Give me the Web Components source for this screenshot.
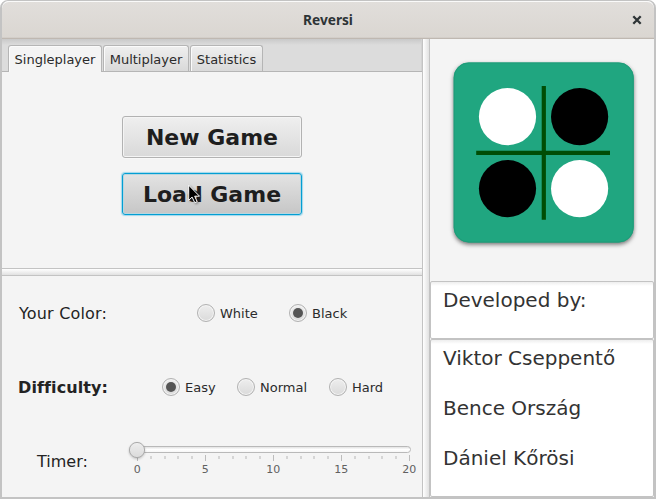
<!DOCTYPE html>
<html lang="en">
<head>
<meta charset="utf-8">
<title>Reversi</title>
<style>
html,body{margin:0;width:656px;height:499px;overflow:hidden;background:#fff}
body{font-family:"DejaVu Sans",sans-serif;font-size:13px;color:#2b2b2b}
</style>
</head>
<body>
<app-window heading="Reversi">
  <game-menu slot="left"></game-menu>
  <game-options slot="left"></game-options>
  <game-logo slot="right"></game-logo>
  <text-panel slot="right" style="height:58px">Developed by:</text-panel>
  <text-panel slot="right" style="height:158px"><div>Viktor Cseppentő</div><div>Bence Ország</div><div>Dániel Kőrösi</div></text-panel>
</app-window>
<script>
function define(name, html){
  customElements.define(name, class extends HTMLElement{
    constructor(){
      super();
      const t=document.createElement('template');
      t.innerHTML=typeof html==='function'?html(this):html;
      this.attachShadow({mode:'open'}).append(t.content.cloneNode(true));
    }
  });
}

define('app-window', el=>`<style>
:host{display:flex;flex-direction:column;box-sizing:border-box;width:656px;height:499px;border:solid #c3c3c3;border-width:1px 2px 2px;border-radius:8px 8px 0 0;background:#f4f4f4;overflow:hidden}
header{height:38px;box-sizing:border-box;flex:none;display:grid;grid-template-columns:1fr auto 1fr;align-items:center;background:linear-gradient(#e1dedb,#dad6d1);border-top:1px solid #fafafa;border-bottom:1px solid #bfb8b1;border-radius:7px 7px 0 0;box-shadow:inset 0 -1px #d3cec9}
h1{grid-column:2;margin:0;font:bold 13.7px/20px "Noto Sans",sans-serif;color:#2e3436;letter-spacing:0}
svg{justify-self:end;margin:-1px 12px 0 0}
main{flex:1;display:grid;grid-template-columns:420px 8px 1fr;min-height:0}
.col{display:flex;flex-direction:column;min-width:0}
.bar{box-sizing:border-box;border:solid #c3c3c3;border-width:0 1px;background:linear-gradient(90deg,#fff,#e1e1e1)}
</style>
<header><h1>${el.getAttribute('heading')}</h1><svg width="10" height="10" viewBox="0 0 10 10"><path d="M1.3 1.3 8.7 8.7M8.7 1.3 1.3 8.7" stroke="#2e3436" stroke-width="2.3"/></svg></header>
<main><div class="col"><slot name="left"></slot></div><div class="bar"></div><div class="col"><slot name="right"></slot></div></main>`);

define('tab-item', `<style>
:host{display:block;box-sizing:border-box;height:26px;padding:0 5px;border:1px solid #b5b5b5;border-bottom:0;border-radius:3px 3px 0 0;background:linear-gradient(#efefef,#d9d9d9);box-shadow:inset 1px 1px #fbfbfb;line-height:27px;text-align:center;white-space:nowrap}
:host([active]){background:#f4f4f4;height:27px}
</style><slot></slot>`);

define('push-button', `<style>
:host{display:grid;place-items:center;box-sizing:border-box;width:180px;height:42px;padding-top:2px;border:1px solid #b2b2b2;border-radius:3px;background:linear-gradient(#efefef,#d9d9d9);box-shadow:inset 0 0 0 1px #f4f4f4,0 1px #f8f8f8;font-weight:bold;font-size:22px;color:#1e1e1e;line-height:38px}
:host([focused]){border-color:#039ed3;background:linear-gradient(#e3e3e3,#c6c6c6);box-shadow:0 0 1px 1px #9fd8ec,inset 0 0 0 1px #b8d6df}
</style><slot></slot>`);

define('game-menu', `<style>
:host{display:flex;flex-direction:column;height:229px}
nav{height:33px;box-sizing:border-box;display:flex;gap:1px;align-items:flex-start;padding:6px 0 0 6px;background:linear-gradient(#c9c9c9,#dcdcdc 6px);border-bottom:1px solid #b5b5b5;box-shadow:inset -1px 0 #d2d2d2}
.buttons{position:relative;display:flex;flex-direction:column;gap:15px;align-items:center;padding-top:44px}
svg{position:absolute;left:185px;top:111px}
</style>
<nav><tab-item active style="width:94px">Singleplayer</tab-item><tab-item style="width:86px">Multiplayer</tab-item><tab-item style="width:73px">Statistics</tab-item></nav>
<div class="buttons"><push-button>New Game</push-button><push-button focused>Load Game</push-button>
<svg width="15" height="23" viewBox="0 0 15 23"><path d="M1.7 2.2V17.3L5.1 14.1 7.8 19.7 10.2 18.7 7.7 13.2H12.5Z" fill="#000" stroke="#fff" stroke-width="1" style="filter:drop-shadow(1px 1px 1px #0006)"/></svg></div>`);

define('radio-option', `<style>
:host{display:flex;align-items:center;gap:5px;height:20px}
i{box-sizing:border-box;width:18px;height:18px;border:1px solid #b1b1b1;border-radius:50%;background:linear-gradient(#eee,#dadada);box-shadow:inset 0 0 0 1px #f5f5f5;display:grid;place-items:center}
:host([checked]) i::after{content:"";width:10px;height:10px;border-radius:50%;background:#555}
</style><i></i><span><slot></slot></span>`);

define('timer-slider', ()=>{
  let s='';
  for(let i=0;i<=20;i++){
    const x=(8.5+i*13.6);
    s+= i%5===0
      ? `<path d="M${Math.floor(x)+.5} 15v6" stroke="#bcbcbc"/><text x="${x-.3}" y="33" text-anchor="middle">${i}</text>`
      : `<path d="M${Math.round(x)} 16v3" stroke="#cfcfcf" stroke-width="1.7"/>`;
  }
  return `<style>:host{display:block;margin-top:-2px}svg{display:block;overflow:visible}text{font-size:11px;fill:#606060}</style>
<svg width="284" height="40"><defs><linearGradient id="t" x2="0" y2="1"><stop stop-color="#ddd"/><stop offset=".5" stop-color="#fff"/><stop offset="1" stop-color="#f4f4f4"/></linearGradient><linearGradient id="b" x2="0" y2="1"><stop stop-color="#eee"/><stop offset="1" stop-color="#dadada"/></linearGradient></defs>
<rect x="5.5" y="6.5" width="276" height="6" rx="3" fill="url(#t)" stroke="#b9b9b9"/>${s}
<circle cx="8" cy="10" r="7.6" fill="url(#b)" stroke="#aaa" style="filter:drop-shadow(0 1px 1px #0003)"/></svg>`;
});

define('game-options', `<style>
:host{display:flex;flex-direction:column}
.bar{height:8px;box-sizing:border-box;border:solid #c3c3c3;border-width:1px 0;background:linear-gradient(#fff,#e1e1e1)}
.form{display:grid;grid-template-rows:74px 74px 74px}
.row{display:flex;align-items:center}
.name{font-size:16px;color:#232323}
</style><div class="bar"></div>
<div class="form">
<div class="row"><span class="name" style="width:178px;padding-left:17px;letter-spacing:.18px">Your Color:</span><radio-option style="width:92px">White</radio-option><radio-option checked>Black</radio-option></div>
<div class="row"><b class="name" style="width:144px;padding-left:16px;letter-spacing:.1px">Difficulty:</b><radio-option checked style="width:75px">Easy</radio-option><radio-option style="width:92px">Normal</radio-option><radio-option>Hard</radio-option></div>
<div class="row"><span class="name" style="width:92px;padding-left:35px">Timer:</span><timer-slider></timer-slider></div>
</div>`);

define('game-logo', `<style>
:host{display:flex;justify-content:center;height:242px;padding-top:19px;box-sizing:border-box}
svg{overflow:visible;margin-left:1px}
</style><svg width="188" height="190" viewBox="449 58 188 190">
<rect x="453.7" y="62.5" width="180" height="180" rx="15" fill="#20a680" style="filter:drop-shadow(0 2px 2px #0008)"/>
<rect x="454.2" y="63" width="179" height="179" rx="14.5" fill="none" stroke="#1e9c79"/>
<path d="M543.8 86V219.8M476.2 152.8H610" stroke="#004d05" stroke-width="4.2"/>
<g fill="#fff"><circle cx="507.5" cy="116.7" r="28.6"/><circle cx="579.6" cy="188.6" r="28.6"/></g>
<circle cx="579.6" cy="116.7" r="28.6"/><circle cx="507.5" cy="188.6" r="28.6"/></svg>`);

define('text-panel', `<style>
:host{display:block;box-sizing:border-box;border:1px solid #c3c3c3;border-radius:2px;padding:3px 12px;background:linear-gradient(#eee,#fff 4px);font-size:20px;line-height:30px;color:#333}
::slotted(div){height:50px}
</style><slot></slot>`);
</script>
</body>
</html>
